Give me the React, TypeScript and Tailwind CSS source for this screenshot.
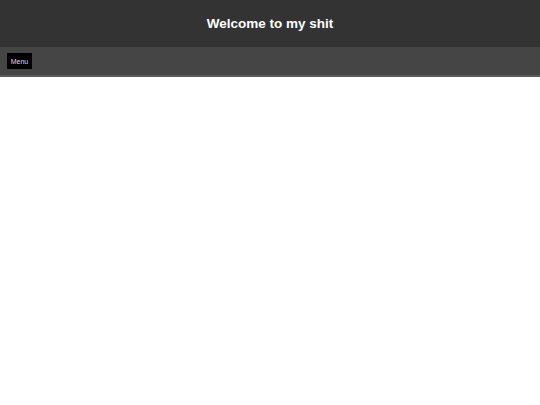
import React from 'react';

const App = () => {
  return (
    <div className="min-h-[405px] bg-white" style={{ fontFamily: '"Liberation Sans", Arial, sans-serif' }}>
      <header className="h-[47px] bg-[#333333] flex items-center justify-center">
        <h1 className="text-[13.5px] font-bold text-white leading-none">Welcome to my shit</h1>
      </header>
      <nav className="h-[30px] bg-[#454545] border-b-2 border-[#5a5a5a] flex items-center pl-[7px]">
        <button className="h-[16px] w-[25px] bg-black text-[7px] text-[#dddddd] flex items-center justify-center leading-none">
          Menu
        </button>
      </nav>
    </div>
  );
};

export default App;
